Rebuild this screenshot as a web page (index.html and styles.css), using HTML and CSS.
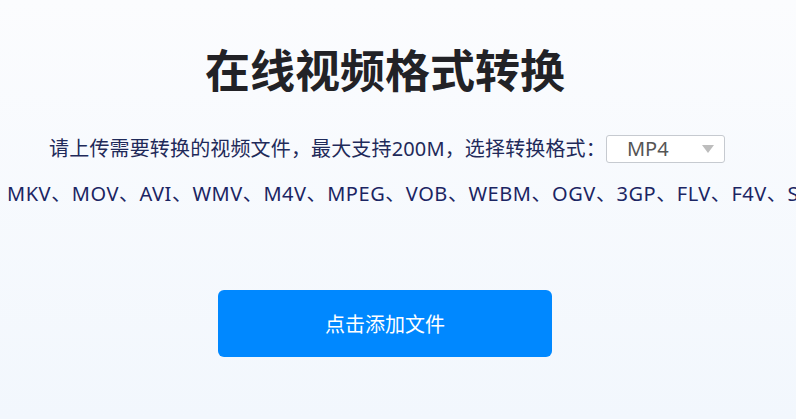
FILE: index.html
```html
<!DOCTYPE html>
<html lang="zh-CN">
<head>
<meta charset="utf-8">
<title>在线视频格式转换</title>
<link rel="stylesheet" href="styles.css">
</head>
<body>
<main class="page">
  <h1 class="title">在线视频格式转换</h1>
  <div class="tip-row">
    <span class="tip">请上传需要转换的视频文件，最大支持200M，选择转换格式：</span>
    <div class="select">
      <span class="select-value">MP4</span>
      <span class="select-arrow"></span>
    </div>
  </div>
  <div class="formats">MKV、MOV、AVI、WMV、M4V、MPEG、VOB、WEBM、OGV、3GP、FLV、F4V、SWF</div>
  <button class="add-btn" type="button">点击添加文件</button>
</main>
</body>
</html>
```

FILE: styles.css
```css
html, body {
  margin: 0;
  padding: 0;
  height: 100%;
  overflow: hidden;
}
body {
  background: linear-gradient(180deg, #fbfcfe 0%, #f2f7fd 100%);
  font-family: "Noto Sans", "Noto Sans CJK SC", sans-serif;
}
.page {
  width: 770px;
  display: flex;
  flex-direction: column;
  align-items: center;
  padding-top: 39px;
}
.title {
  margin: 0;
  font-family: "Noto Sans CJK SC", sans-serif;
  font-size: 45px;
  line-height: 60px;
  font-weight: 700;
  color: #222226;
}
.tip-row {
  margin-top: 36px;
  margin-left: 4px;
  display: flex;
  align-items: center;
  gap: 0;
  height: 28px;
}
.tip {
  font-size: 20px;
  line-height: 28px;
  letter-spacing: 0.15px;
  color: #1f2a5a;
}
.select {
  box-sizing: border-box;
  width: 119px;
  height: 28px;
  border: 1px solid #c6cad0;
  border-radius: 3px;
  background: #fff;
  display: flex;
  align-items: center;
  justify-content: space-between;
  padding: 0 10px 0 20px;
}
.select-value {
  font-size: 20px;
  line-height: 26px;
  color: #555;
}
.select-arrow {
  width: 0;
  height: 0;
  border-left: 6px solid transparent;
  border-right: 6px solid transparent;
  border-top: 8px solid #bdbdbd;
}
.formats {
  align-self: stretch;
  width: 789px;
  margin-top: 17px;
  padding-left: 7px;
  white-space: nowrap;
  overflow: hidden;
  font-size: 20px;
  line-height: 28px;
  letter-spacing: 0.55px;
  color: #1b2563;
}
.add-btn {
  margin-top: 82px;
  width: 334px;
  height: 67px;
  border: none;
  border-radius: 6px;
  background: #0088ff;
  color: #fff;
  font-family: "Noto Sans CJK SC", sans-serif;
  font-size: 20px;
}
```
